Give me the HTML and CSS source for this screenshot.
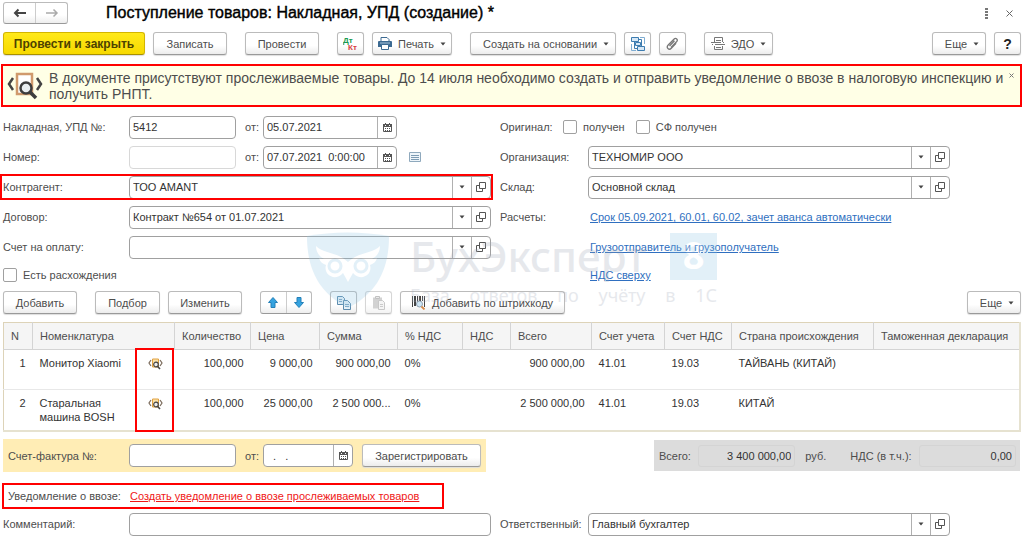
FILE: index.html
```html
<!DOCTYPE html>
<html lang="ru">
<head>
<meta charset="utf-8">
<title>Поступление товаров: Накладная, УПД (создание) *</title>
<link rel="stylesheet" href="styles.css">
</head>
<body>
<svg class="sprite" aria-hidden="true">
  <symbol id="caret" viewBox="0 0 6 4"><path d="M0.5 0.5h5L3 3.5z" fill="#444"/></symbol>
  <symbol id="open" viewBox="0 0 10 10"><path d="M3.5 0.5h6v6h-6zM3.500 3.500H0.500v6h6V6.500" fill="none" stroke="#555"/></symbol>
  <symbol id="calendar" viewBox="0 0 9 9"><path d="M0.500 1.500h8v7h-8z" fill="#fff" stroke="#555"/><path d="M0 1h9v3H0zM2 0h1v1H2zM6 0h1v1H6z" fill="#555"/><path d="M2 5h1v1H2zM4 5h1v1H4zM6 5h1v1H6zM2 7h1v1H2zM4 7h1v1H4zM6 7h1v1H6z" fill="#555"/><path d="M2 2h1v1H2zM6 2h1v1H6z" fill="#fff"/></symbol>
  <symbol id="trace" viewBox="0 0 36 28">
    <path d="M6 6L2 12l4 6M30 6l4 6-4 6" fill="none" stroke="#444" stroke-width="2.500"/>
    <path d="M10 2h15v20H10z" fill="#fff" stroke="#d09a6c" stroke-width="2.500"/>
    <circle cx="19" cy="16" r="5.500" fill="#e9eef0" stroke="#3d3d3d" stroke-width="2.500"/>
    <path d="M23 20l6 6" stroke="#3d3d3d" stroke-width="3.500"/>
  </symbol>
  <symbol id="trace-small" viewBox="0 0 15 12">
    <path d="M3 2L1 5l2 3M12 2l2 3-2 3" fill="none" stroke="#7a6a5a" stroke-width="1.200"/>
    <path d="M4.500 1h6v8h-6z" fill="#fbe2a8" stroke="#e0a040"/>
    <circle cx="8" cy="6.500" r="2.300" fill="#eee" stroke="#444" stroke-width="1.200"/>
    <path d="M9.700 8.500l2.300 2.500" stroke="#444" stroke-width="1.600"/>
  </symbol>
</svg>

<main class="page">
  <header class="titlebar">
    <div class="nav">
      <button type="button" aria-label="Назад"><svg width="14" height="10" viewBox="0 0 14 10"><path d="M13 5H2M5.500 1.500L2 5l3.500 3.500" fill="none" stroke="#444" stroke-width="2"/></svg></button>
      <button type="button" aria-label="Вперед"><svg width="14" height="10" viewBox="0 0 14 10"><path d="M1 5h11M8.500 1.500L12 5 8.500 8.500" fill="none" stroke="#aaa" stroke-width="1.500"/></svg></button>
    </div>
    <h1>Поступление товаров: Накладная, УПД (создание) *</h1>
    <button type="button" class="plain" aria-label="Меню"><svg width="3" height="11" viewBox="0 0 3 11"><path d="M0 0h3v2H0zM0 3h3v2H0zM0 6h3v2H0zM0 9h3v2H0z" fill="#777"/></svg></button>
    <button type="button" class="plain" aria-label="Закрыть"><svg width="7" height="7" viewBox="0 0 7 7"><path d="M0.500 0.500l6 6M6.500 0.500l-6 6" stroke="#666"/></svg></button>
  </header>

  <div class="toolbar">
    <button type="button" class="btn primary">Провести и закрыть</button>
    <button type="button" class="btn write">Записать</button>
    <button type="button" class="btn post far">Провести</button>
    <button type="button" class="btn icon far" aria-label="Дт Кт"><svg width="16" height="15" viewBox="0 0 16 15" font-family="Liberation Sans, sans-serif" font-weight="bold" font-size="8"><text x="0" y="7" fill="#1a9a50">Дт</text><text x="5" y="14" fill="#d84040">Кт</text></svg></button>
    <button type="button" class="btn print"><svg width="14" height="13" viewBox="0 0 14 13"><path d="M3 0.500h6l2 2V5H3z" fill="#fff" stroke="#3c6a92"/><path d="M1 4h12a1 1 0 0 1 1 1v5H0V5a1 1 0 0 1 1-1z" fill="#3c6a92"/><path d="M3.500 7.500h7v5h-7z" fill="#fff" stroke="#3c6a92"/><path d="M2 6h10" stroke="#a9c4da"/></svg>Печать<svg class="caret"><use href="#caret"/></svg></button>
    <button type="button" class="btn base far">Создать на основании<svg class="caret"><use href="#caret"/></svg></button>
    <button type="button" class="btn icon" aria-label="Структура подчиненности"><svg width="14" height="14" viewBox="0 0 14 14"><path d="M3.500 4.500v7h3M7.500 2.500h3v7" fill="none" stroke="#3d7cb0"/><path d="M0.500 0.500h7v4h-7zM4.500 5.500h5v3h-5zM6.500 9.500h7v4h-7z" fill="#d7e8f6" stroke="#3d7cb0"/><path d="M9 .5h4.500V7M.5 7v6.500H5" fill="none" stroke="#7fadd2"/></svg></button>
    <button type="button" class="btn icon" aria-label="Файлы"><svg width="13" height="13" viewBox="0 0 13 13"><path d="M3.500 9l5-5.200M5 10.500l5.500-5.700c2-2.200-.6-4.600-2.600-2.600L2.200 8c-2.500 2.700.8 5.600 3.100 3.300l5-5.200" fill="none" stroke="#777" stroke-width="1.300"/></svg></button>
    <button type="button" class="btn edo far"><svg width="14" height="13" viewBox="0 0 14 13"><path d="M3.500 5V.5h8V5M3.500 9v3.500h8V9M5 3.500h5M0 5.500h10M4 7.500h10M5 10.500h5M1 7.500h1M12 5.500h1" fill="none" stroke="#777"/></svg>ЭДО<svg class="caret"><use href="#caret"/></svg></button>
    <span class="spacer"></span>
    <button type="button" class="btn more">Еще<svg class="caret"><use href="#caret"/></svg></button>
    <button type="button" class="btn icon help">?</button>
  </div>

  <section class="alert">
    <svg class="alert-icon"><use href="#trace"/></svg>
    <p>В документе присутствуют прослеживаемые товары. До 14 июля необходимо создать и отправить уведомление о ввозе в налоговую инспекцию и получить РНПТ.</p>
    <button type="button" class="plain" aria-label="Закрыть сообщение"><svg width="5" height="5" viewBox="0 0 5 5"><path d="M0.500 0.500l4 4M4.500 0.500l-4 4" stroke="#777"/></svg></button>
  </section>

  <section class="form">
    <div class="column">
      <div class="row"><label for="doc-no">Накладная, УПД №:</label>
        <div class="field number"><input id="doc-no" value="5412"></div>
        <label class="from" for="doc-date">от:</label>
        <div class="field date"><input id="doc-date" value="05.07.2021"><button type="button" aria-label="Календарь"><svg class="cal"><use href="#calendar"/></svg></button></div></div>
      <div class="row"><label for="num">Номер:</label>
        <div class="field number disabled"><input id="num" disabled></div>
        <label class="from" for="num-date">от:</label>
        <div class="field date"><input id="num-date" value="07.07.2021  0:00:00"><button type="button" aria-label="Календарь"><svg class="cal"><use href="#calendar"/></svg></button></div>
        <svg class="list" width="12" height="10" viewBox="0 0 12 10"><path d="M0.500 0.500h11v9h-11z" fill="#eef5fa" stroke="#8fa9bd"/><path d="M2 3.500h8M2 5.500h8M2 7.500h8" stroke="#7d9bb3"/></svg></div>
      <div class="row marked"><label for="partner">Контрагент:</label>
        <div class="field wide"><input id="partner" value="ТОО AMANT"><button type="button" aria-label="Выбрать"><svg class="caret"><use href="#caret"/></svg></button><button type="button" aria-label="Открыть"><svg class="open"><use href="#open"/></svg></button></div></div>
      <div class="row"><label for="contract">Договор:</label>
        <div class="field wide"><input id="contract" value="Контракт №654 от 01.07.2021"><button type="button" aria-label="Выбрать"><svg class="caret"><use href="#caret"/></svg></button><button type="button" aria-label="Открыть"><svg class="open"><use href="#open"/></svg></button></div></div>
      <div class="row"><label for="bill">Счет на оплату:</label>
        <div class="field wide"><input id="bill"><button type="button" aria-label="Выбрать"><svg class="caret"><use href="#caret"/></svg></button><button type="button" aria-label="Открыть"><svg class="open"><use href="#open"/></svg></button></div></div>
      <div class="row short"><label class="check"><input type="checkbox">Есть расхождения</label></div>
    </div>
    <div class="column right">
      <div class="row"><span class="caption original">Оригинал:</span><label class="check"><input type="checkbox">получен</label><label class="check"><input type="checkbox">СФ получен</label></div>
      <div class="row"><label for="org">Организация:</label>
        <div class="field wide"><input id="org" value="ТЕХНОМИР ООО"><button type="button" aria-label="Выбрать"><svg class="caret"><use href="#caret"/></svg></button><button type="button" aria-label="Открыть"><svg class="open"><use href="#open"/></svg></button></div></div>
      <div class="row"><label for="store">Склад:</label>
        <div class="field wide"><input id="store" value="Основной склад"><button type="button" aria-label="Выбрать"><svg class="caret"><use href="#caret"/></svg></button><button type="button" aria-label="Открыть"><svg class="open"><use href="#open"/></svg></button></div></div>
      <div class="row"><span class="caption">Расчеты:</span><a href="#">Срок 05.09.2021, 60.01, 60.02, зачет аванса автоматически</a></div>
      <div class="row"><span class="caption"></span><a href="#">Грузоотправитель и грузополучатель</a></div>
      <div class="row short"><span class="caption"></span><a href="#">НДС сверху</a></div>
    </div>
    <div class="watermark">
      <svg width="82" height="76" viewBox="0 0 82 76"><path d="M0 4Q40-3 82 4C82 40 68 62 41 76 14 62 0 40 0 4z" fill="#8fc4e4"/><path d="M9 14c8 8 22 6 32 16C51 20 65 22 73 14c0 7-4 11-8 13l5-1c-1 4-4 6-7 7 3 10-9 17-17 8l-5 9-5-9c-8 9-20 2-17-8-3-1-6-3-7-7l5 1c-4-2-8-6-8-13z" fill="#fff"/><circle cx="28" cy="34" r="6" fill="none" stroke="#8fc4e4" stroke-width="3"/><circle cx="54" cy="34" r="6" fill="none" stroke="#8fc4e4" stroke-width="3"/></svg>
      <div class="brand">
        <div class="brand-name"><span>БухЭксперт</span><b>8</b></div>
        <div class="tagline"><span>База</span><span>ответов</span><span>по</span><span>учёту</span><span>в</span><span>1С</span></div>
      </div>
    </div>
  </section>

  <div class="toolbar items">
    <button type="button" class="btn write">Добавить</button>
    <button type="button" class="btn pick far">Подбор</button>
    <button type="button" class="btn write">Изменить</button>
    <div class="pair far">
      <button type="button" aria-label="Вверх"><svg width="10" height="11" viewBox="0 0 10 11"><path d="M5 .5L9.500 5.500H7v5H3v-5H.5z" fill="#35a3e0" stroke="#2480b8"/></svg></button>
      <button type="button" aria-label="Вниз"><svg width="10" height="11" viewBox="0 0 10 11"><path d="M5 10.500L.5 5.500H3v-5h4v5h2.500z" fill="#35a3e0" stroke="#2480b8"/></svg></button>
    </div>
    <button type="button" class="btn icon far" aria-label="Копировать"><svg width="14" height="14" viewBox="0 0 14 14"><path d="M.5.500h5l2 2v6h-7z" fill="#e6f1f8" stroke="#5b8bad"/><path d="M6.500 4.500h4l3 3v6h-7z" fill="#e6f1f8" stroke="#5b8bad"/><path d="M2 3.500h3M2 5.500h3M8 8.500h4M8 10.500h4" stroke="#7fa6c2"/></svg></button>
    <button type="button" class="btn icon faded" aria-label="Вставить"><svg width="14" height="14" viewBox="0 0 14 14"><path d="M1 1.500h9v11H1z" fill="#b5b5b5"/><path d="M3.500.5h4v2h-4z" fill="#ddd" stroke="#999"/><path d="M6.500 4.500h4l2 2v7h-6z" fill="#eee" stroke="#a5a5a5"/><path d="M8 8.500h3M8 10.500h3" stroke="#aaa"/></svg></button>
    <button type="button" class="btn barcode"><svg width="14" height="14" viewBox="0 0 14 14"><path d="M0 0h1v11H0zM2 0h2v10H2zM5 0h1v6H5zM7 0h2v5H7zM10 0h1v5h-1zM12 0h1v11h-1z" fill="#444"/><circle cx="7.500" cy="8" r="3" fill="#cfe6f5" stroke="#8f9fae"/><path d="M9.500 10.500l3 3" stroke="#d58a4a" stroke-width="1.800"/></svg>Добавить по штрихкоду</button>
    <span class="spacer"></span>
    <button type="button" class="btn more">Еще<svg class="caret"><use href="#caret"/></svg></button>
  </div>

  <div class="table-wrap">
    <table>
      <colgroup><col class="c-n"><col class="c-name"><col class="c-icon"><col class="c-qty"><col class="c-price"><col class="c-sum"><col class="c-rate"><col class="c-vat"><col class="c-total"><col class="c-acc"><col class="c-accvat"><col class="c-country"><col></colgroup>
      <thead><tr><th>N</th><th colspan="2">Номенклатура</th><th>Количество</th><th>Цена</th><th>Сумма</th><th>% НДС</th><th>НДС</th><th>Всего</th><th>Счет учета</th><th>Счет НДС</th><th>Страна происхождения</th><th>Таможенная декларация</th></tr></thead>
      <tbody>
        <tr><td class="num">1</td><td>Монитор Xiaomi</td><td class="mark"><svg><use href="#trace-small"/></svg></td><td class="num">100,000</td><td class="num">9 000,00</td><td class="num">900 000,00</td><td>0%</td><td></td><td class="num">900 000,00</td><td>41.01</td><td>19.03</td><td>ТАЙВАНЬ (КИТАЙ)</td><td></td></tr>
        <tr><td class="num">2</td><td>Старальная машина BOSH</td><td class="mark"><svg><use href="#trace-small"/></svg></td><td class="num">100,000</td><td class="num">25 000,00</td><td class="num">2 500 000...</td><td>0%</td><td></td><td class="num">2 500 000,00</td><td>41.01</td><td>19.03</td><td>КИТАЙ</td><td></td></tr>
      </tbody>
    </table>
    <div class="icon-frame"></div>
  </div>

  <div class="summary">
    <div class="invoice"><label for="inv">Счет-фактура №:</label>
      <div class="field number"><input id="inv"></div>
      <label class="from" for="inv-date">от:</label>
      <div class="field date small"><input id="inv-date" value="  .   ."><button type="button" aria-label="Календарь"><svg class="cal"><use href="#calendar"/></svg></button></div>
      <button type="button" class="btn register">Зарегистрировать</button></div>
    <div class="totals"><label for="total">Всего:</label><input id="total" value="3 400 000,00" readonly><span class="unit">руб.</span><label for="vat">НДС (в т.ч.):</label><input id="vat" value="0,00" readonly></div>
  </div>

  <div class="notice"><span>Уведомление о ввозе:</span><a href="#">Создать уведомление о ввозе прослеживаемых товаров</a></div>

  <section class="form last">
    <div class="column"><div class="row"><label for="comment">Комментарий:</label><div class="field wide"><input id="comment"></div></div></div>
    <div class="column right"><div class="row"><label for="resp">Ответственный:</label>
      <div class="field wide"><input id="resp" value="Главный бухгалтер"><button type="button" aria-label="Выбрать"><svg class="caret"><use href="#caret"/></svg></button><button type="button" aria-label="Открыть"><svg class="open"><use href="#open"/></svg></button></div></div></div>
  </section>
</main>
</body>
</html>
```
FILE: styles.css
```css
* { box-sizing: border-box; }
body { margin: 0; background: #fff; color: #4d4d4d; font: 11px/14px "Liberation Sans", Arial, sans-serif; }
button, input { font: inherit; color: inherit; margin: 0; }
button { padding: 0; white-space: nowrap; }
a { color: #2f6fc0; }
.sprite { position: absolute; width: 0; height: 0; }
.page { padding: 2px 3px 4px; }
.caret { width: 6px; height: 4px; flex: none; }
.open { width: 10px; height: 10px; }
.cal { width: 9px; height: 9px; }
.plain { border: 0; background: none; display: flex; align-items: center; justify-content: center; }
.spacer { flex: 1; }

.titlebar { display: flex; align-items: center; height: 22px; }
.titlebar h1 { flex: 1; margin: 0 0 0 38px; color: #000; font-size: 16px; line-height: 22px; font-weight: normal; -webkit-text-stroke: 0.4px #000; }
.titlebar .plain { width: 23px; height: 22px; }
.nav, .pair { display: flex; border: 1px solid #bbb; border-bottom-color: #999; border-radius: 3px; background: linear-gradient(#fff 60%, #eee); }
.nav { width: 65px; height: 22px; }
.nav button, .pair button { flex: 1; border: 0; background: none; display: flex; align-items: center; justify-content: center; }
.nav button + button, .pair button + button { border-left: 1px solid #ccc; }

.toolbar { display: flex; gap: 8px; margin-top: 8px; }
.far { margin-left: 10px; }
.btn { display: flex; align-items: center; justify-content: center; gap: 6px; height: 23px; border: 1px solid #bbb; border-bottom-color: #999; border-radius: 3px; background: linear-gradient(#fff 60%, #ececec); box-shadow: 0 1px 1px #ddd; }
.btn.primary { width: 142px; border-color: #d3b500; border-bottom-color: #a89000; background: linear-gradient(#ffe91a, #f7d900); color: #4d4200; font-weight: bold; font-size: 12px; }
.write { width: 74px; }
.post { width: 74px; }
.icon { width: 27px; }
.print { width: 80px; }
.base { width: 146px; padding-left: 6px; }
.edo { width: 69px; }
.more { width: 54px; padding-left: 6px; }
.help { color: #222; font-weight: bold; font-size: 14px; }
.pick { width: 65px; }
.pair { width: 52px; height: 23px; }
.barcode { width: 165px; }
.faded { opacity: 0.6; }
.items { margin-top: 0; }

.alert { display: flex; align-items: center; height: 43px; margin: 9px -1px 0 -2px; border: 2px solid #f00; background: #ffffe6; padding: 0 4px; }
.alert-icon { width: 36px; height: 28px; flex: none; }
.alert p { flex: 1; margin: 0 0 0 6px; font-size: 14px; line-height: 16px; }
.alert .plain { width: 10px; height: 18px; align-self: flex-start; }

.form { position: relative; display: grid; grid-template-columns: 488fr 450fr; column-gap: 9px; padding-right: 71px; margin-top: 8px; }
.row { display: flex; align-items: center; height: 24px; margin-bottom: 6px; position: relative; }
.row > label, .caption { flex: none; width: 126px; }
.right .row > label, .right .caption { width: 88px; }
.right a { margin-left: 2px; }
.row .check, .right .row > .check { display: flex; align-items: center; gap: 6px; width: auto; margin-right: 11px; }
.right .original { width: 63px; }
.check input { appearance: none; width: 14px; height: 14px; border: 1px solid #a0a0a0; border-radius: 2px; background: #fff; }
.row.short { height: 20px; margin-top: 0; }
.row .from, .right .row .from, .invoice .from { width: 27px; padding-left: 9px; }
.field { display: flex; height: 23px; border: 1px solid #a0a0a0; border-radius: 4px; background: #fff; }
.field input { flex: 1; min-width: 0; width: 100%; padding: 0 3px; border: 0; background: none; color: #333; white-space: pre; outline: 0; }
.field button { width: 19px; flex: none; border: 0; border-left: 1px solid #b0b0b0; background: none; display: flex; align-items: center; justify-content: center; }
.number { width: 107px; }
.date { width: 134px; }
.date.small { width: 90px; }
.wide { flex: 1; }
.disabled { border-color: #d8d8d8; }
.list { margin-left: 12px; }
.marked::after { content: ""; position: absolute; inset: -1px -2px -1px -3px; border: 2px solid #f00; pointer-events: none; }

.watermark { position: absolute; left: 304px; top: 117px; display: flex; gap: 21px; opacity: 0.25; pointer-events: none; z-index: 1; }
.brand { width: 307px; font-family: "Noto Sans", sans-serif; color: #a0a8b8; }
.brand-name { display: flex; justify-content: space-between; align-items: center; height: 48px; font-size: 42px; line-height: 44px; font-weight: 500; }
.brand-name b { width: 47px; height: 47px; background: #8fc4e4; color: #fff; text-align: center; font-size: 38px; line-height: 43px; }
.tagline { display: flex; justify-content: space-between; margin-top: 4px; font-size: 18px; line-height: 22px; }

.table-wrap { position: relative; margin-top: 8px; }
table { width: 100%; table-layout: fixed; border-collapse: collapse; border: 1px solid #ddd3b8; border-bottom: 2px solid #e6e2d0; border-right: 2px solid #e6e2d0; }
th { height: 27px; padding: 0 0 0 7px; text-align: left; font-weight: normal; white-space: nowrap; background: #f5f5f5; border-right: 1px solid #d4d4d4; border-bottom: 1px solid #d4d4d4; }
td { height: 40px; padding: 6px 7px; vertical-align: top; color: #333; border-top: 1px solid #e8e8e8; }
td.num { text-align: right; padding-left: 0; white-space: nowrap; }
td.mark { padding: 8px 0 0 10px; }
td.mark svg { display: block; width: 15px; height: 12px; }
.c-n { width: 29px; } .c-name { width: 105px; } .c-icon { width: 37px; } .c-qty { width: 76px; } .c-price { width: 69px; } .c-sum { width: 78px; } .c-rate { width: 65px; } .c-vat { width: 48px; } .c-total { width: 81px; } .c-acc { width: 73px; } .c-accvat { width: 67px; } .c-country { width: 142px; }
.icon-frame { position: absolute; left: 132px; top: 26px; bottom: 0; width: 39px; border: 2px solid #f00; pointer-events: none; }

.summary { display: flex; justify-content: space-between; align-items: center; margin: 7px 1px 0 0; }
.invoice { display: flex; align-items: center; width: 483px; height: 33px; background: #ffedb5; }
.invoice label { width: 126px; padding-left: 5px; }
.register { width: 119px; margin-left: 9px; }
.totals { display: flex; align-items: center; width: 366px; height: 31px; padding: 0 4px 0 5px; background: #dcdcdc; }
.totals label { flex: 1 1 auto; white-space: nowrap; }
.totals input { width: 97px; height: 22px; padding: 0 3px; border: 1px solid #d4d4d4; border-radius: 3px; background: none; text-align: right; color: #333; }
.unit { width: 55px; padding-left: 10px; }

.notice { display: flex; align-items: center; width: 442px; height: 26px; margin: 11px 0 0 -1px; border: 2px solid #f00; padding-left: 4px; white-space: nowrap; }
.notice span { width: 122px; }
.notice a { color: #f01818; }
.form.last { margin-top: 3px; }
.last .row { margin-bottom: 0; }
```
